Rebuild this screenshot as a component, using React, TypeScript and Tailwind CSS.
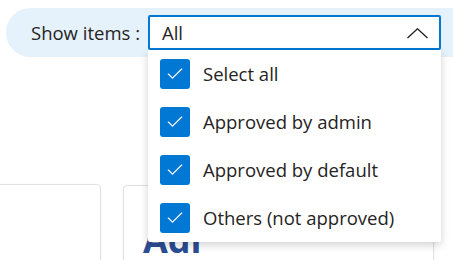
import { Check } from "lucide-react";

const options = ["Select all", "Approved by admin", "Approved by default", "Others (not approved)"];

const App = () => {
  return (
    <div className="h-[260px] w-[453px] overflow-hidden bg-white font-['Open_Sans',sans-serif] text-[#252423]">
      {/* Filter bar */}
      <div className="ml-[6px] mt-[8px] flex h-[49px] w-[520px] items-center rounded-l-full bg-[#e5f1fb] pl-[25px]">
        <span className="w-[117px] text-[18.5px]">Show items :</span>
        <div className="relative">
          <div className="flex h-[35px] w-[293px] items-center justify-between rounded-[2px] border-2 border-[#0078d4] bg-white pl-[12px] pr-[11px]">
            <span className="text-[18.5px]">All</span>
            <svg width="21" height="11" viewBox="0 0 21 11" fill="none" className="mt-[1px] text-[#201f1e]">
              <path d="M0.5 10L10.5 0.8L20.5 10" stroke="currentColor" strokeWidth="1.3" />
            </svg>
          </div>

          {/* Dropdown list */}
          <div className="absolute left-0 top-[35px] z-10 w-[293px] rounded-b-[2px] bg-white shadow-[0_3px_8px_rgba(0,0,0,0.18)]">
            {options.map((o) => (
              <div key={o} className="flex h-12 items-center gap-[13px] pl-[12px]">
                <div className="flex h-[30px] w-[30px] items-center justify-center rounded-[3px] bg-[#0078d4]">
                  <Check className="h-[20px] w-[20px] text-white" strokeWidth={1.4} />
                </div>
                <span className="text-[18.5px]">{o}</span>
              </div>
            ))}
          </div>
        </div>
      </div>

      {/* Cards behind */}
      <div className="ml-[-210px] mt-[127px] flex gap-[22px]">
        <div className="h-[120px] w-[311px] shrink-0 rounded-[4px] border border-[#e1e1e1] bg-white shadow-[0_1px_3px_rgba(0,0,0,0.06)]" />
        <div className="mt-[1px] h-[120px] w-[311px] shrink-0 rounded-[4px] border border-[#e1e1e1] bg-white px-[19px] pt-[36px] shadow-[0_1px_3px_rgba(0,0,0,0.06)]">
          <span className="text-[36px] font-bold leading-none text-[#2b4d93]">Adi</span>
        </div>
      </div>
    </div>
  );
};

export default App;
